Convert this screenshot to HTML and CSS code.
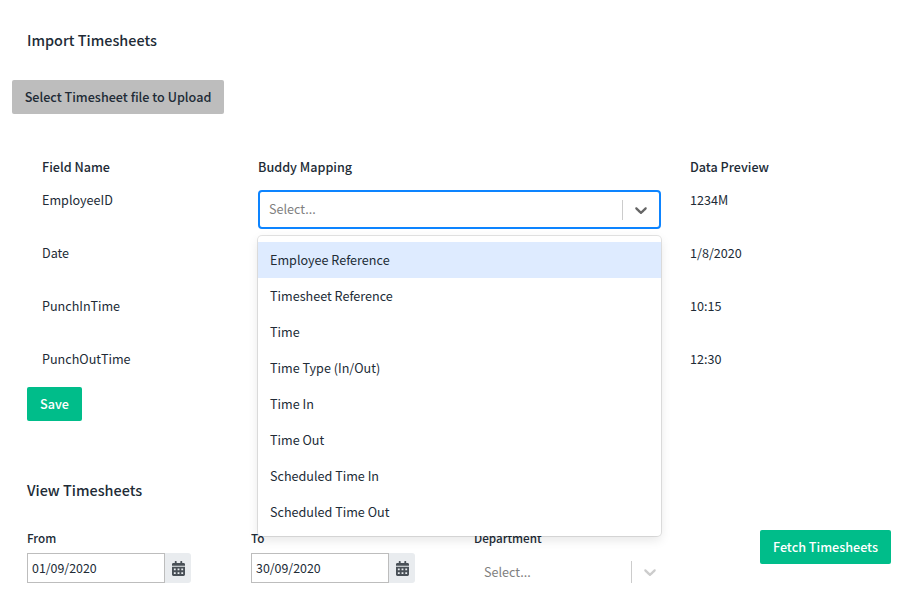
FILE: index.html
```html
<!DOCTYPE html>
<html lang="en">
<head>
  <meta charset="UTF-8">
  <title>Timesheets</title>
  <link rel="stylesheet" href="styles.css">
</head>
<body>
  <article class="pageContainer">
    <h2 class="sectionTitle importTitle">Import Timesheets</h2>
    <button class="styledBtn backGray uploadBtn">Select Timesheet file to Upload</button>

    <section class="mappingGrid">
      <div class="gridHead">Field Name</div>
      <div class="gridHead">Buddy Mapping</div>
      <div class="gridHead">Data Preview</div>

      <div>EmployeeID</div>
      <div class="selectCell">
        <div class="selectControl focused">
          <span class="selectPlaceholder">Select...</span>
          <span class="selectSeparator"></span>
          <svg class="selectChevron" viewBox="0 0 20 20"><path d="M4.516 7.548c0.436-0.446 1.043-0.481 1.576 0l3.908 3.747 3.908-3.747c0.533-0.481 1.141-0.446 1.574 0 0.436 0.445 0.408 1.197 0 1.615-0.406 0.418-4.695 4.502-4.695 4.502-0.217 0.223-0.502 0.335-0.787 0.335s-0.57-0.112-0.789-0.335c0 0-4.287-4.084-4.695-4.502s-0.436-1.17 0-1.615z"/></svg>
        </div>
        <ul class="selectMenu">
          <li class="active">Employee Reference</li>
          <li>Timesheet Reference</li>
          <li>Time</li>
          <li>Time Type (In/Out)</li>
          <li>Time In</li>
          <li>Time Out</li>
          <li>Scheduled Time In</li>
          <li>Scheduled Time Out</li>
        </ul>
      </div>
      <div>1234M</div>

      <div>Date</div>
      <div></div>
      <div>1/8/2020</div>

      <div>PunchInTime</div>
      <div></div>
      <div>10:15</div>

      <div>PunchOutTime</div>
      <div></div>
      <div>12:30</div>
    </section>

    <button class="styledBtn backGreen saveBtn">Save</button>

    <h2 class="sectionTitle viewTitle">View Timesheets</h2>

    <section class="filterRow">
      <div class="filterField">
        <label class="filterLabel" for="fromDate">From</label>
        <div class="dateGroup">
          <input class="dateInput" id="fromDate" type="text" value="01/09/2020">
          <span class="dateAddon">
            <svg class="calendarIcon" viewBox="0 0 448 512"><path d="M0 464c0 26.5 21.5 48 48 48h352c26.5 0 48-21.5 48-48V192H0v272zm320-196c0-6.6 5.4-12 12-12h40c6.6 0 12 5.4 12 12v40c0 6.6-5.4 12-12 12h-40c-6.6 0-12-5.4-12-12v-40zm0 128c0-6.6 5.4-12 12-12h40c6.6 0 12 5.4 12 12v40c0 6.6-5.4 12-12 12h-40c-6.6 0-12-5.4-12-12v-40zM192 268c0-6.6 5.4-12 12-12h40c6.6 0 12 5.4 12 12v40c0 6.6-5.4 12-12 12h-40c-6.6 0-12-5.4-12-12v-40zm0 128c0-6.6 5.4-12 12-12h40c6.6 0 12 5.4 12 12v40c0 6.6-5.4 12-12 12h-40c-6.6 0-12-5.4-12-12v-40zM64 268c0-6.6 5.4-12 12-12h40c6.6 0 12 5.4 12 12v40c0 6.6-5.4 12-12 12H76c-6.6 0-12-5.4-12-12v-40zm0 128c0-6.6 5.4-12 12-12h40c6.6 0 12 5.4 12 12v40c0 6.6-5.4 12-12 12H76c-6.6 0-12-5.4-12-12v-40zM400 64h-48V16c0-8.8-7.2-16-16-16h-32c-8.8 0-16 7.2-16 16v48H160V16c0-8.8-7.2-16-16-16h-32c-8.8 0-16 7.2-16 16v48H48C21.5 64 0 85.5 0 112v48h448v-48c0-26.5-21.5-48-48-48z"/></svg>
          </span>
        </div>
      </div>
      <div class="filterField">
        <label class="filterLabel" for="toDate">To</label>
        <div class="dateGroup">
          <input class="dateInput" id="toDate" type="text" value="30/09/2020">
          <span class="dateAddon">
            <svg class="calendarIcon" viewBox="0 0 448 512"><path d="M0 464c0 26.5 21.5 48 48 48h352c26.5 0 48-21.5 48-48V192H0v272zm320-196c0-6.6 5.4-12 12-12h40c6.6 0 12 5.4 12 12v40c0 6.6-5.4 12-12 12h-40c-6.6 0-12-5.4-12-12v-40zm0 128c0-6.6 5.4-12 12-12h40c6.6 0 12 5.4 12 12v40c0 6.6-5.4 12-12 12h-40c-6.6 0-12-5.4-12-12v-40zM192 268c0-6.6 5.4-12 12-12h40c6.6 0 12 5.4 12 12v40c0 6.6-5.4 12-12 12h-40c-6.6 0-12-5.4-12-12v-40zm0 128c0-6.6 5.4-12 12-12h40c6.6 0 12 5.4 12 12v40c0 6.6-5.4 12-12 12h-40c-6.6 0-12-5.4-12-12v-40zM64 268c0-6.6 5.4-12 12-12h40c6.6 0 12 5.4 12 12v40c0 6.6-5.4 12-12 12H76c-6.6 0-12-5.4-12-12v-40zm0 128c0-6.6 5.4-12 12-12h40c6.6 0 12 5.4 12 12v40c0 6.6-5.4 12-12 12H76c-6.6 0-12-5.4-12-12v-40zM400 64h-48V16c0-8.8-7.2-16-16-16h-32c-8.8 0-16 7.2-16 16v48H160V16c0-8.8-7.2-16-16-16h-32c-8.8 0-16 7.2-16 16v48H48C21.5 64 0 85.5 0 112v48h448v-48c0-26.5-21.5-48-48-48z"/></svg>
          </span>
        </div>
      </div>
      <div class="filterField departmentField">
        <label class="filterLabel">Department</label>
        <div class="selectControl plain">
          <span class="selectPlaceholder">Select...</span>
          <span class="selectSeparator"></span>
          <svg class="selectChevron" viewBox="0 0 20 20"><path d="M4.516 7.548c0.436-0.446 1.043-0.481 1.576 0l3.908 3.747 3.908-3.747c0.533-0.481 1.141-0.446 1.574 0 0.436 0.445 0.408 1.197 0 1.615-0.406 0.418-4.695 4.502-4.695 4.502-0.217 0.223-0.502 0.335-0.787 0.335s-0.57-0.112-0.789-0.335c0 0-4.287-4.084-4.695-4.502s-0.436-1.17 0-1.615z"/></svg>
        </div>
      </div>
      <button class="styledBtn backGreen fetchBtn">Fetch Timesheets</button>
    </section>
  </article>
</body>
</html>
```
FILE: styles.css
```css
body {
  margin: 0;
  background-color: white;
  color: #212b36;
  font-family: "Noto Sans CJK SC", "Open Sans", sans-serif;
  font-size: 12.6px;
  line-height: 20px;
  overflow: hidden;
}

.pageContainer {
  height: 607px;
  padding: 0 12px;
  box-sizing: border-box;
}

.sectionTitle {
  margin: 0;
  font-size: 14.4px;
  line-height: 22px;
  font-weight: 500;
}

.importTitle {
  padding: 29px 0 0 15px;
}

.viewTitle {
  margin-top: 58px;
  padding-left: 15px;
}

.styledBtn {
  border: 0;
  border-radius: 2px;
  font-family: inherit;
  font-size: 12.6px;
  font-weight: 500;
  line-height: 20px;
  height: 34px;
  padding: 0;
  white-space: nowrap;
}

.backGray {
  background-color: #bdbdbd;
  color: #212b36;
}

.backGreen {
  background-color: #00bd8a;
  color: white;
}

.uploadBtn {
  display: block;
  width: 212px;
  margin-top: 29px;
}

.saveBtn {
  display: block;
  width: 55px;
  margin: 1px 0 0 15px;
}

.mappingGrid {
  display: grid;
  grid-template-columns: 216px 432px auto;
  grid-template-rows: 17px repeat(4, 37px);
  row-gap: 16px;
  margin-top: 43px;
  padding-left: 30px;
}

.gridHead {
  font-weight: 500;
}

.selectCell {
  position: relative;
  width: 403px;
}

.selectControl {
  display: flex;
  align-items: center;
  box-sizing: border-box;
}

.selectControl.focused {
  height: 39px;
  border: 2px solid #0d84ff;
  border-radius: 4px;
  padding-left: 9px;
}

.selectControl.focused .selectPlaceholder {
  padding-bottom: 1px;
}

.selectControl.plain {
  width: 194px;
  height: 22px;
  margin-top: 13px;
  padding-left: 10px;
}

.selectPlaceholder {
  flex: 1;
  color: #808080;
}

.selectSeparator {
  width: 1px;
  height: 20px;
  background-color: #cccccc;
}

.selectControl.plain .selectSeparator {
  height: 22px;
}

.selectChevron {
  width: 20px;
  height: 20px;
  margin: 0 8px;
  fill: #666666;
}

.selectControl.plain .selectChevron {
  fill: #cccccc;
}

.selectMenu {
  position: absolute;
  top: 46px;
  left: 0;
  right: 0;
  z-index: 2;
  margin: 0;
  padding: 6px 0;
  list-style: none;
  background-color: white;
  border-radius: 4px;
  box-shadow: 0 0 0 1px rgba(0, 0, 0, 0.1), 0 4px 11px rgba(0, 0, 0, 0.1);
}

.selectMenu li {
  height: 36px;
  line-height: 36px;
  padding-left: 12px;
}

.selectMenu li.active {
  background-color: #deebff;
}

.filterRow {
  display: flex;
  align-items: flex-start;
  margin-top: 29px;
  padding-left: 15px;
}

.filterField {
  width: 224px;
}

.filterField + .filterField {
  width: 223px;
}

.filterField.departmentField {
  width: 286px;
}

.filterLabel {
  display: block;
  font-size: 11.7px;
  font-weight: 500;
  height: 20px;
  margin-top: -2px;
}

.dateGroup {
  display: flex;
  width: 164px;
  height: 30px;
  margin-top: 5px;
}

.dateInput {
  width: 138px;
  box-sizing: border-box;
  border: 1px solid #bdbdbd;
  padding: 0 4px 1px;
  font-family: inherit;
  font-size: 12.4px;
  color: #212b36;
  outline: 0;
}

.dateAddon {
  flex: 1;
  display: flex;
  align-items: center;
  justify-content: center;
  background-color: #e9ecef;
  border-radius: 0 3px 3px 0;
}

.calendarIcon {
  width: 13px;
  height: 15px;
  fill: #495057;
}

.fetchBtn {
  width: 131px;
}
```
